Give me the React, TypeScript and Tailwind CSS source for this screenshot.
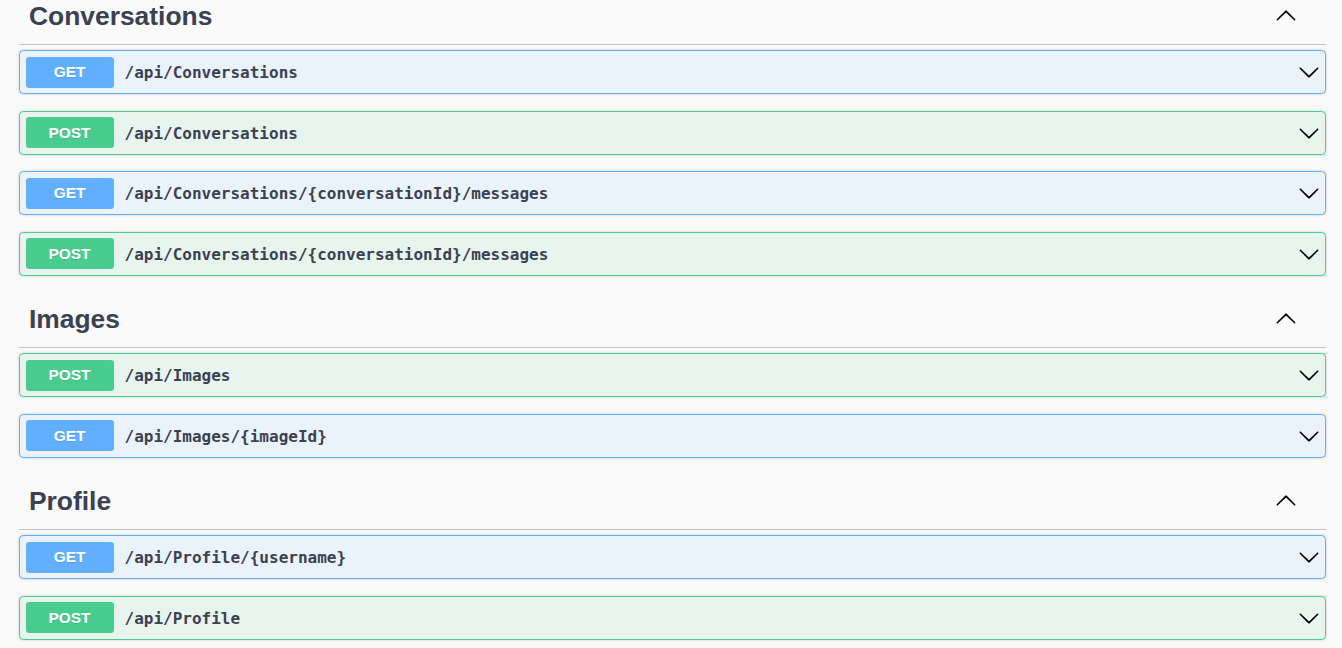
type Op = { method: 'GET' | 'POST'; path: string };

const sections: { name: string; ops: Op[] }[] = [
  {
    name: 'Conversations',
    ops: [
      { method: 'GET', path: '/api/Conversations' },
      { method: 'POST', path: '/api/Conversations' },
      { method: 'GET', path: '/api/Conversations/{conversationId}/messages' },
      { method: 'POST', path: '/api/Conversations/{conversationId}/messages' },
    ],
  },
  {
    name: 'Images',
    ops: [
      { method: 'POST', path: '/api/Images' },
      { method: 'GET', path: '/api/Images/{imageId}' },
    ],
  },
  {
    name: 'Profile',
    ops: [
      { method: 'GET', path: '/api/Profile/{username}' },
      { method: 'POST', path: '/api/Profile' },
    ],
  },
];

function Arrow({ up = false }: { up?: boolean }) {
  return (
    <svg
      width="22"
      height="22"
      viewBox="0 0 20 20"
      className={up ? 'rotate-180 shrink-0' : 'shrink-0'}
      fill="#000"
    >
      <path d="M17.418 6.109c.272-.268.709-.268.979 0s.271.701 0 .969l-7.908 7.83c-.27.268-.707.268-.979 0l-7.908-7.83c-.27-.268-.27-.701 0-.969.271-.268.709-.268.979 0L10 13.25l7.418-7.141z" />
    </svg>
  );
}

function Operation({ op }: { op: Op }) {
  const isGet = op.method === 'GET';
  return (
    <div
      className={`mb-[16.5px] flex h-[44px] items-center rounded-[4.4px] border p-[5.5px] shadow-[0_0_3px_rgba(0,0,0,0.19)] ${
        isGet ? 'border-[#61affe] bg-[#ebf3fa]' : 'border-[#49cc90] bg-[#e8f5ef]'
      }`}
    >
      <div
        className={`flex h-[31px] w-[88px] shrink-0 items-center justify-center rounded-[3.3px] font-['Liberation_Sans',Arial,sans-serif] text-[15.4px] font-bold text-white [text-shadow:0_1px_0_rgba(0,0,0,0.1)] ${
          isGet ? 'bg-[#61affe]' : 'bg-[#49cc90]'
        }`}
      >
        {op.method}
      </div>
      <span className="ml-[11px] flex-1 pt-[2px] font-['DejaVu_Sans_Mono',monospace] text-[16px] font-bold text-[#3b4151]">
        {op.path}
      </span>
      <Arrow />
    </div>
  );
}

export default function App() {
  return (
    <div className="min-h-[648px] overflow-hidden bg-[#fafafa] pl-[19px] pr-[16px]">
      <div className="-mt-[11px]">
        {sections.map((section) => (
          <div key={section.name}>
            <div className="mb-[5px] flex h-[56px] items-center border-b border-[#c1c3c7] pl-[10px] pr-[29px]">
              <h3 className="flex-1 font-['Liberation_Sans',Arial,sans-serif] text-[26.4px] font-bold text-[#3b4151]">
                {section.name}
              </h3>
              <div className="mb-[2px]">
                <Arrow up />
              </div>
            </div>
            {section.ops.map((op, i) => (
              <Operation key={i} op={op} />
            ))}
          </div>
        ))}
      </div>
    </div>
  );
}
